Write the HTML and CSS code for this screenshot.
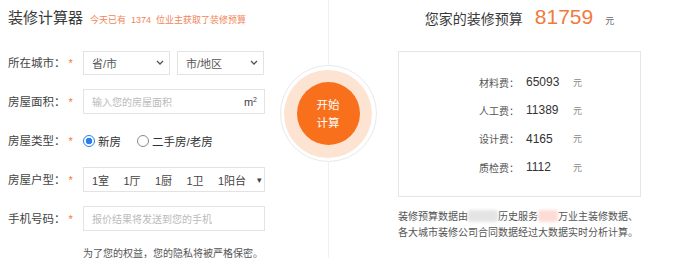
FILE: index.html
```html
<!DOCTYPE html>
<html lang="zh-CN">
<head>
<meta charset="utf-8">
<title>装修计算器</title>
<link rel="stylesheet" href="styles.css">
</head>
<body>
<div class="page">
  <section class="left">
    <div class="head">
      <h1 class="title">装修计算器</h1>
      <span class="sub">今天已有&nbsp;&nbsp;1374&nbsp;&nbsp;位业主获取了装修预算</span>
    </div>
    <div class="row">
      <div class="label">所在城市：<span class="star">*</span></div>
      <div class="select"><span>省/市</span><svg class="chev" width="8" height="5" viewBox="0 0 8 5"><polyline points="1,1 4,4 7,1" fill="none" stroke="#555" stroke-width="1.3"/></svg></div>
      <div class="select"><span>市/地区</span><svg class="chev" width="8" height="5" viewBox="0 0 8 5"><polyline points="1,1 4,4 7,1" fill="none" stroke="#555" stroke-width="1.3"/></svg></div>
    </div>
    <div class="row">
      <div class="label">房屋面积：<span class="star">*</span></div>
      <div class="input"><span>输入您的房屋面积</span><span class="unit">m<sup>2</sup></span></div>
    </div>
    <div class="row">
      <div class="label">房屋类型：<span class="star">*</span></div>
      <label class="radio"><span class="dot on"></span>新房</label>
      <label class="radio"><span class="dot"></span>二手房/老房</label>
    </div>
    <div class="row">
      <div class="label">房屋户型：<span class="star">*</span></div>
      <div class="rooms">
        <span class="room">1室</span><span class="room">1厅</span><span class="room">1厨</span><span class="room">1卫</span><span class="room">1阳台</span><span class="caret">▾</span>
      </div>
    </div>
    <div class="row">
      <div class="label">手机号码：<span class="star">*</span></div>
      <div class="input"><span>报价结果将发送到您的手机</span></div>
    </div>
    <p class="note">为了您的权益，您的隐私将被严格保密。</p>
  </section>
  <section class="right">
    <div class="rhead">
      <span class="rtitle">您家的装修预算</span>
      <span class="total">81759</span>
      <span class="yuan">元</span>
    </div>
    <div class="box">
      <div class="item"><span class="k">材料费：</span><span class="v">65093</span><span class="u">元</span></div>
      <div class="item"><span class="k">人工费：</span><span class="v">11389</span><span class="u">元</span></div>
      <div class="item"><span class="k">设计费：</span><span class="v">4165</span><span class="u">元</span></div>
      <div class="item"><span class="k">质检费：</span><span class="v">1112</span><span class="u">元</span></div>
    </div>
    <p class="desc">装修预算数据由<span class="blur gray"></span>历史服务<span class="blur pink"></span>万业主装修数据、<br>各大城市装修公司合同数据经过大数据实时分析计算。</p>
  </section>
  <div class="start">
    <div class="halo">
      <button class="go">开始<br>计算</button>
    </div>
  </div>
</div>
</body>
</html>
```

FILE: styles.css
```css
* { box-sizing: border-box; margin: 0; padding: 0; }
body {
  width: 673px;
  height: 258px;
  overflow: hidden;
  background: #fff;
  color: #333;
  font-family: "Liberation Sans", "Noto Sans CJK SC", sans-serif;
}
.page {
  position: relative;
  display: grid;
  grid-template-columns: 328px 345px;
  height: 258px;
}
.left { padding-left: 8px; }
.head {
  height: 43px;
  padding-top: 8px;
  display: flex;
  align-items: baseline;
}
.title { font-size: 15px; line-height: 20px; font-weight: normal; color: #3a3a3a; }
.sub { font-size: 9px; line-height: 12px; color: #f0855a; margin-left: 7px; }
.row { height: 39px; display: flex; align-items: center; }
.label {
  width: 75px;
  display: flex;
  align-items: center;
  font-size: 11.5px;
  line-height: 16px;
  color: #444;
}
.star { color: #f07a3d; font-size: 11px; margin-left: 3px; }
.select {
  width: 87px;
  height: 24px;
  border: 1px solid #e3e3e3;
  display: flex;
  align-items: center;
  justify-content: space-between;
  padding: 0 5px 0 8px;
  font-size: 11px;
  color: #555;
}
.select + .select { margin-left: 7px; }
.input {
  width: 182px;
  height: 25px;
  border: 1px solid #e3e3e3;
  display: flex;
  align-items: center;
  justify-content: space-between;
  padding: 0 7px 0 8px;
  font-size: 10px;
  color: #bbb;
}
.unit { font-size: 11px; color: #444; }
.unit sup { font-size: 7px; vertical-align: 4px; }
.radio { display: flex; align-items: center; font-size: 11.5px; color: #333; }
.radio + .radio { margin-left: 16px; }
.dot {
  width: 12px;
  height: 12px;
  border-radius: 50%;
  border: 1px solid #8a8a8a;
  margin-right: 3px;
  background: #fff;
}
.dot.on {
  border: 1.5px solid #2a7ff0;
  background: radial-gradient(circle, #2a7ff0 0 3px, #fff 3.6px);
}
.rooms {
  width: 182px;
  height: 25px;
  border: 1px solid #e3e3e3;
  display: flex;
  align-items: center;
  padding-left: 8px;
  font-size: 11px;
  color: #444;
}
.room { width: 31.5px; }
.caret { font-size: 9px; margin-left: 7px; color: #444; }
.note {
  margin: 8px 0 0 75px;
  font-size: 10px;
  line-height: 15px;
  color: #555;
}
.right { border-left: 1px solid #f1f1f1; padding-left: 69px; }
.rhead {
  width: 243px;
  padding-top: 2px;
  height: 51px;
  display: flex;
  justify-content: center;
  align-items: baseline;
}
.rtitle { font-size: 14px; line-height: 30px; color: #3a3a3a; }
.total { font-size: 21px; line-height: 30px; color: #f07a3d; margin-left: 12px; }
.yuan { font-size: 9px; color: #666; margin-left: 12px; }
.box {
  width: 243px;
  height: 146px;
  border: 1px solid #e6e6e6;
  padding: 16px 0 0 80px;
}
.item { height: 28.33px; display: flex; align-items: center; }
.k { width: 47px; font-size: 10px; color: #555; }
.v { width: 47px; font-size: 12px; color: #333; }
.u { font-size: 9px; color: #888; }
.desc {
  margin-top: 12px;
  font-size: 10px;
  line-height: 16px;
  color: #555;
  white-space: nowrap;
}
.blur {
  display: inline-block;
  height: 12px;
  vertical-align: -2px;
  border-radius: 3px;
  filter: blur(1.5px);
}
.blur.gray { width: 3em; background: #e4e4e4; }
.blur.pink { width: 2em; background: #fddcd6; }
.start {
  position: absolute;
  left: 279.5px;
  top: 65px;
  width: 97px;
  height: 97px;
  border-radius: 50%;
  border: 1px solid #e9e9e9;
  background: #fff;
  display: flex;
  align-items: center;
  justify-content: center;
}
.halo {
  width: 88px;
  height: 88px;
  border-radius: 50%;
  background: #fde4d2;
  display: flex;
  align-items: center;
  justify-content: center;
}
.go {
  width: 63px;
  height: 63px;
  border-radius: 50%;
  border: none;
  background: #f86f1c;
  color: #fff;
  font-family: "Liberation Sans", "Noto Sans CJK SC", sans-serif;
  font-size: 11.5px;
  line-height: 18px;
}
```
